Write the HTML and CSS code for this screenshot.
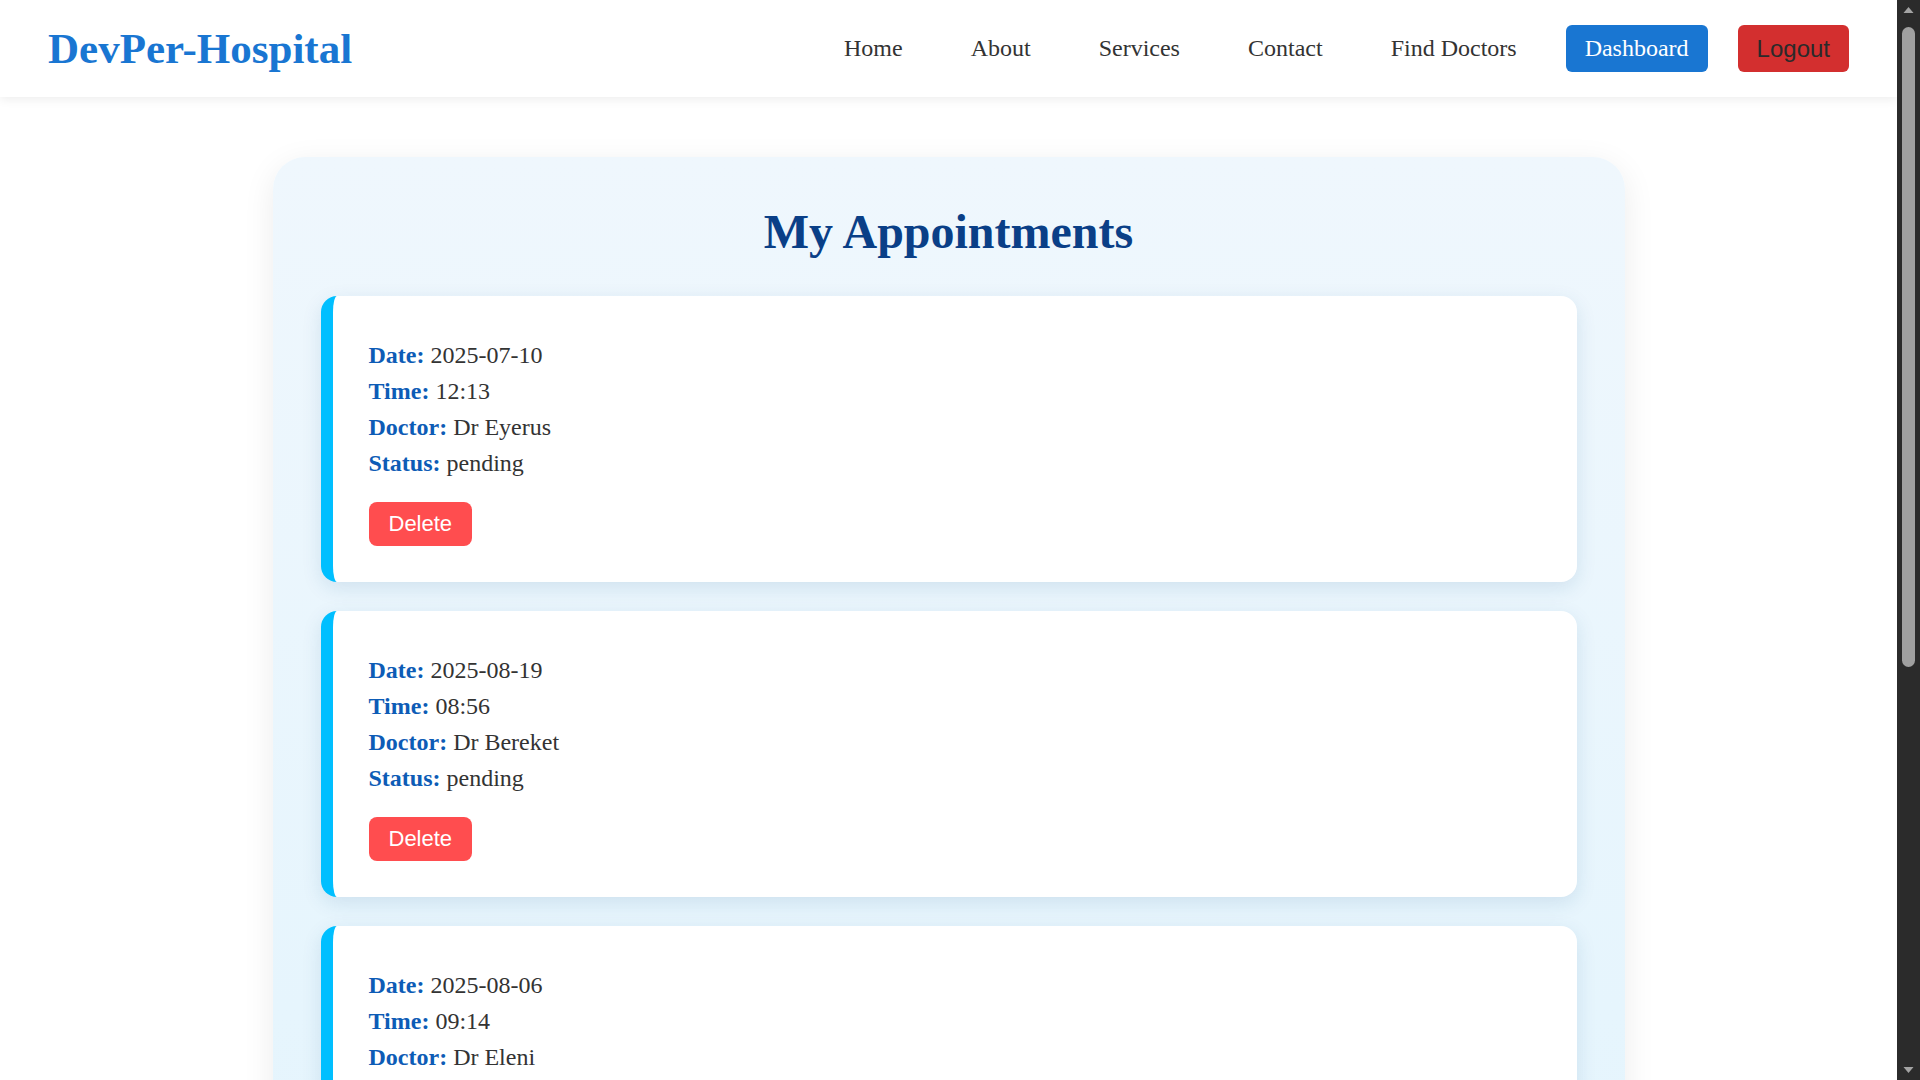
FILE: index.html
```html
<!DOCTYPE html>
<html lang="en">
<head>
<meta charset="UTF-8">
<title>My Appointments - DevPer-Hospital</title>
<link rel="stylesheet" href="styles.css">
</head>
<body>
<header class="navbar">
  <h1 class="logo">DevPer-Hospital</h1>
  <nav class="nav">
    <a class="nav-link" href="#">Home</a>
    <a class="nav-link" href="#">About</a>
    <a class="nav-link" href="#">Services</a>
    <a class="nav-link" href="#">Contact</a>
    <a class="nav-link" href="#">Find Doctors</a>
    <a class="nav-link nav-dashboard" href="#">Dashboard</a>
    <button class="nav-logout" type="button">Logout</button>
  </nav>
</header>

<main class="appointments">
  <h2 class="appointments-title">My Appointments</h2>
  <div class="appointment-list">
    <div class="appointment-card">
      <p class="row"><strong class="label">Date:</strong> 2025-07-10</p>
      <p class="row"><strong class="label">Time:</strong> 12:13</p>
      <p class="row"><strong class="label">Doctor:</strong> Dr Eyerus</p>
      <p class="row"><strong class="label">Status:</strong> pending</p>
      <button class="delete-btn" type="button">Delete</button>
    </div>
    <div class="appointment-card">
      <p class="row"><strong class="label">Date:</strong> 2025-08-19</p>
      <p class="row"><strong class="label">Time:</strong> 08:56</p>
      <p class="row"><strong class="label">Doctor:</strong> Dr Bereket</p>
      <p class="row"><strong class="label">Status:</strong> pending</p>
      <button class="delete-btn" type="button">Delete</button>
    </div>
    <div class="appointment-card">
      <p class="row"><strong class="label">Date:</strong> 2025-08-06</p>
      <p class="row"><strong class="label">Time:</strong> 09:14</p>
      <p class="row"><strong class="label">Doctor:</strong> Dr Eleni</p>
      <p class="row"><strong class="label">Status:</strong> pending</p>
      <button class="delete-btn" type="button">Delete</button>
    </div>
    <div class="appointment-card">
      <p class="row"><strong class="label">Date:</strong> 2025-08-12</p>
      <p class="row"><strong class="label">Time:</strong> 10:30</p>
      <p class="row"><strong class="label">Doctor:</strong> Dr Eyerus</p>
      <p class="row"><strong class="label">Status:</strong> pending</p>
      <button class="delete-btn" type="button">Delete</button>
    </div>
  </div>
</main>

<div class="scrollbar" aria-hidden="true">
  <svg class="scroll-arrow" width="13" height="22" viewBox="0 0 13 22">
    <polygon points="1.5,13 6.5,7 11.5,13" fill="#a3a3a3"/>
  </svg>
  <div class="scroll-thumb"></div>
  <div class="scroll-space"></div>
  <svg class="scroll-arrow" width="13" height="22" viewBox="0 0 13 22">
    <polygon points="1.5,9 11.5,9 6.5,15" fill="#a3a3a3"/>
  </svg>
</div>
</body>
</html>
```

FILE: styles.css
```css
html {
  background: #ffffff;
}

body {
  margin: 0 23px 0 0;
  font-family: "Liberation Serif", "Times New Roman", serif;
  color: #333333;
  background: #ffffff;
}

.navbar {
  display: flex;
  align-items: center;
  justify-content: space-between;
  padding: 24px 48px;
  background: #ffffff;
  box-shadow: 0 2px 10px rgba(0, 0, 0, 0.08);
  position: relative;
  z-index: 1;
}

.logo {
  margin: 0;
  font-size: 43px;
  line-height: 1.15;
  font-weight: bold;
  color: #1976d2;
}

.nav {
  display: flex;
  align-items: center;
  gap: 30px;
}

.nav-link {
  display: block;
  padding: 10px 19px;
  font-size: 24px;
  line-height: 27px;
  color: #333333;
  text-decoration: none;
  border-radius: 6px;
}

.nav-dashboard {
  background: #1976d2;
  color: #ffffff;
}

.nav-logout {
  display: block;
  padding: 10px 19px;
  font-family: "Liberation Sans", Arial, sans-serif;
  font-size: 24px;
  line-height: 27px;
  color: #2a2a2a;
  background: #d32f2f;
  border: none;
  border-radius: 6px;
}

.appointments {
  max-width: 1352px;
  box-sizing: border-box;
  margin: 60px auto 168px;
  padding: 48px;
  border-radius: 32px;
  background: linear-gradient(to bottom, #eff7fd 0%, #e6f5fd 60%, #e3f3fc 100%);
  box-shadow: 0 8px 32px rgba(0, 0, 0, 0.08);
}

.appointments-title {
  margin: 0 0 37px;
  font-size: 48px;
  line-height: 54px;
  font-weight: bold;
  text-align: center;
  color: #0a3f87;
}

.appointment-list {
  display: flex;
  flex-direction: column;
  gap: 29px;
}

.appointment-card {
  background: #ffffff;
  border-left: 12px solid #00bfff;
  border-radius: 16px;
  padding: 41px 36px 36px;
  box-shadow: 0 6px 20px rgba(20, 80, 130, 0.12);
}

.row {
  margin: 0;
  font-size: 24px;
  line-height: 36px;
  color: #333333;
}

.label {
  color: #0d5cb6;
}

.delete-btn {
  margin-top: 21px;
  padding: 10px 20px;
  font-family: "Liberation Sans", Arial, sans-serif;
  font-size: 22px;
  line-height: 24px;
  color: #ffffff;
  background: #ff4d4f;
  border: none;
  border-radius: 8px;
}

.scrollbar {
  position: fixed;
  top: 0;
  right: 0;
  bottom: 0;
  width: 23px;
  box-sizing: border-box;
  padding: 0 5px;
  background: #2b2b2b;
  display: flex;
  flex-direction: column;
  align-items: center;
  z-index: 5;
}

.scroll-arrow {
  flex: none;
  display: block;
}

.scroll-thumb {
  flex: none;
  width: 13px;
  height: 640px;
  margin-top: 5px;
  background: #a0a0a0;
  border-radius: 7px;
}

.scroll-space {
  flex: 1;
}
```
